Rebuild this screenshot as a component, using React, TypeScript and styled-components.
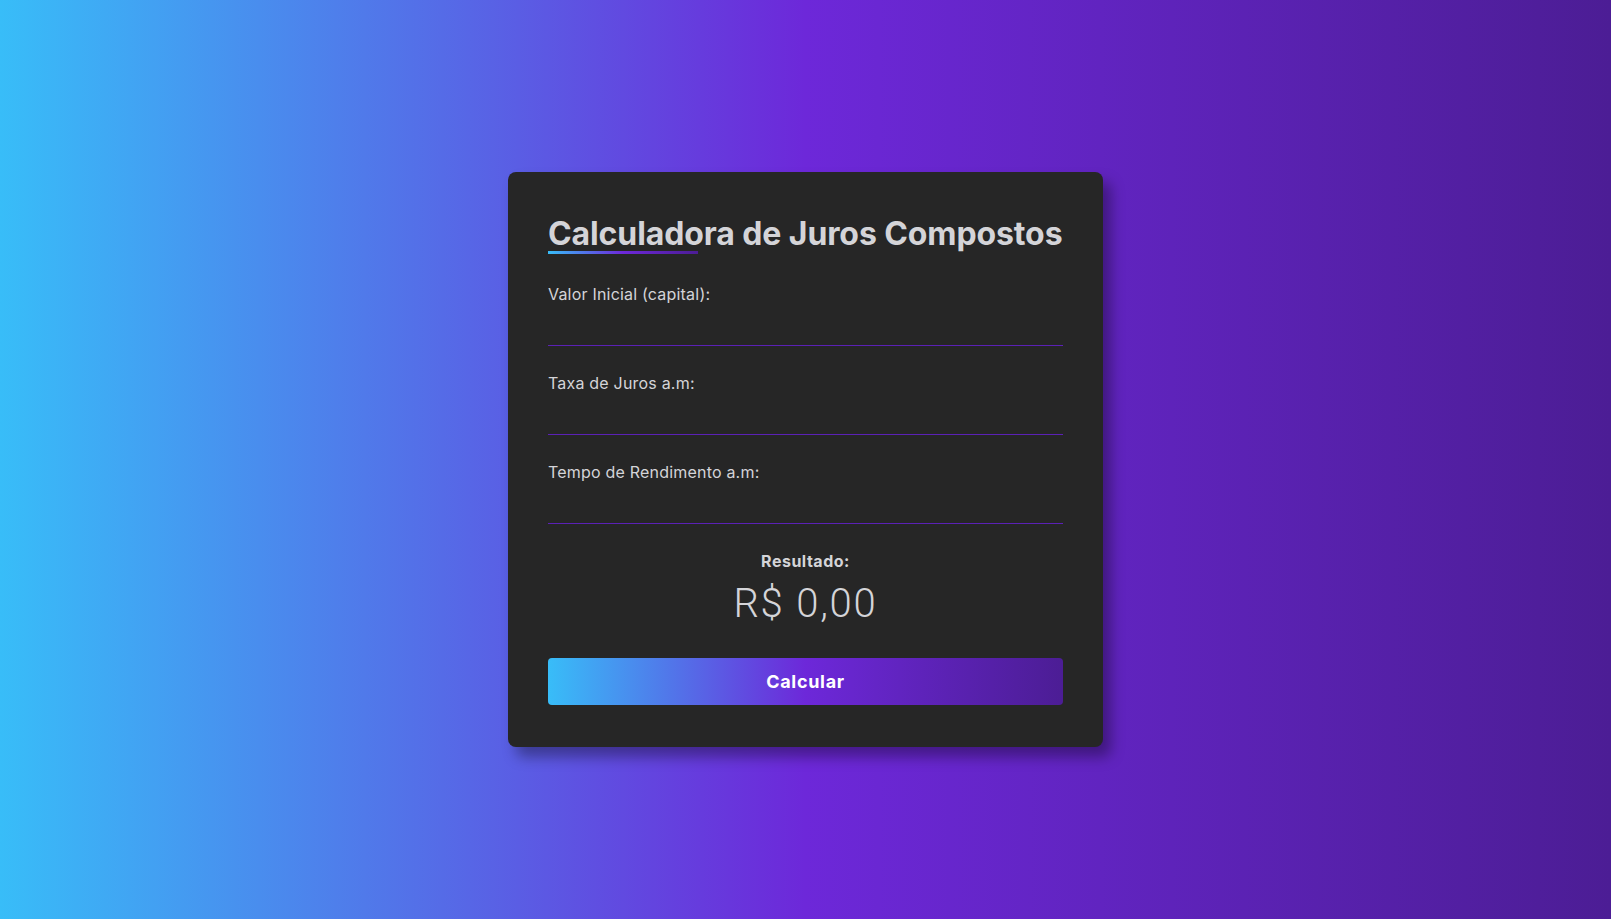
import React from "react";
import styled, { createGlobalStyle } from "styled-components";

const GlobalStyle = createGlobalStyle`
  * { box-sizing: border-box; }
  html, body { margin: 0; padding: 0; }
  body {
    font-family: "Inter", "Noto Sans", sans-serif;
    background: linear-gradient(to right, #38bdf8 0%, #6d28d9 50%, #4c1d95 100%);
    min-height: 100vh;
  }
`;

const Page = styled.main`
  min-height: 100vh;
  display: flex;
  align-items: center;
  justify-content: center;
`;

const Card = styled.section`
  width: 595px;
  padding: 41px 40px 42px;
  background: #262626;
  border-radius: 8px;
  box-shadow: 8px 10px 14px rgba(0, 0, 0, 0.35);
  display: flex;
  flex-direction: column;
`;

const Title = styled.h1`
  position: relative;
  margin: 0 0 27px 0;
  font-family: "Inter", "Noto Sans", sans-serif;
  font-weight: 700;
  font-size: 32px;
  line-height: 42px;
  color: #d4d4d8;
  white-space: nowrap;
  letter-spacing: -0.1px;

  &::after {
    content: "";
    position: absolute;
    left: 0;
    bottom: 1px;
    width: 150px;
    height: 3px;
    background: linear-gradient(to right, #38bdf8, #6d28d9, #4c1d95);
  }
`;

const Field = styled.div`
  display: flex;
  flex-direction: column;
  margin-bottom: 25px;
`;

const Label = styled.label`
  font-family: "Inter", "Noto Sans", sans-serif;
  font-size: 16px;
  line-height: 24px;
  font-weight: 400;
  color: #d4d4d8;
  letter-spacing: 0.2px;
`;

const Input = styled.input`
  height: 40px;
  width: 100%;
  background: transparent;
  border: none;
  border-bottom: 1px solid #5b21b6;
  outline: none;
  color: #d4d4d8;
  font-family: "Inter", "Noto Sans", sans-serif;
  font-size: 16px;
  padding: 0;
`;

const Result = styled.div`
  display: flex;
  flex-direction: column;
  align-items: center;
  margin-bottom: 31px;
`;

const ResultLabel = styled.span`
  font-family: "Inter", "Noto Sans", sans-serif;
  font-weight: 700;
  font-size: 16px;
  line-height: 24px;
  color: #d4d4d8;
  margin-bottom: 7px;
  letter-spacing: 0.5px;
`;

const ResultValue = styled.span`
  font-family: "Roboto", "Noto Sans", sans-serif;
  font-weight: 300;
  font-size: 40px;
  line-height: 47px;
  color: #d4d4d8;
  letter-spacing: 1.8px;
`;

const Button = styled.button`
  height: 47px;
  width: 100%;
  border: none;
  border-radius: 4px;
  background: linear-gradient(to right, #38bdf8 0%, #6d28d9 50%, #4c1d95 100%);
  color: #ffffff;
  font-family: "Inter", "Noto Sans", sans-serif;
  font-weight: 700;
  font-size: 18px;
  letter-spacing: 0.7px;
  cursor: pointer;
`;

export default function App() {
  return (
    <>
      <GlobalStyle />
      <Page>
        <Card>
          <Title>Calculadora de Juros Compostos</Title>
          <Field>
            <Label htmlFor="capital">Valor Inicial (capital):</Label>
            <Input id="capital" type="text" />
          </Field>
          <Field>
            <Label htmlFor="taxa">Taxa de Juros a.m:</Label>
            <Input id="taxa" type="text" />
          </Field>
          <Field>
            <Label htmlFor="tempo">Tempo de Rendimento a.m:</Label>
            <Input id="tempo" type="text" />
          </Field>
          <Result>
            <ResultLabel>Resultado:</ResultLabel>
            <ResultValue>R$ 0,00</ResultValue>
          </Result>
          <Button type="button">Calcular</Button>
        </Card>
      </Page>
    </>
  );
}
